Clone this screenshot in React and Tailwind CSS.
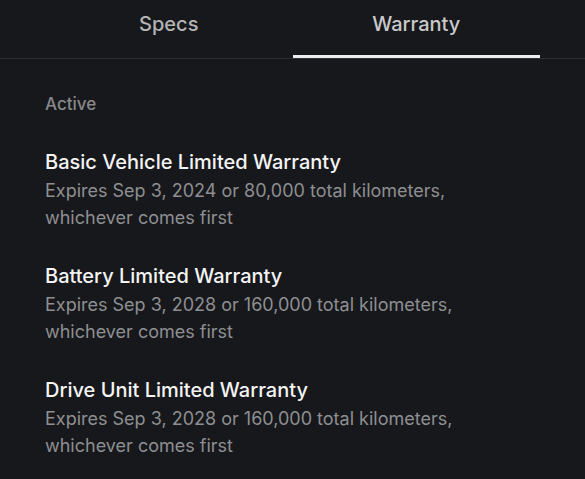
import React, { useState } from "react";

const warranties = [
  { id: "basic", title: "Basic Vehicle Limited Warranty", expires: "Sep 3, 2024", km: "80,000" },
  { id: "battery", title: "Battery Limited Warranty", expires: "Sep 3, 2028", km: "160,000" },
  { id: "drive", title: "Drive Unit Limited Warranty", expires: "Sep 3, 2028", km: "160,000" },
];

const tabs = ["Specs", "Warranty"];

export default function App() {
  const [tab, setTab] = useState("Warranty");

  return (
    <div className="min-h-screen bg-[#17181b] font-['Inter','Liberation_Sans',sans-serif] antialiased">
      {/* tabs */}
      <div className="flex px-[45px] border-b border-[#2d2e31]">
        {tabs.map((t) => (
          <button
            key={t}
            onClick={() => setTab(t)}
            className={`flex-1 h-[58px] flex justify-center pt-[10px] border-b-[3px] text-[20px] leading-7 font-medium ${
              tab === t ? "border-[#ececec] text-[#c9c9cb]" : "border-transparent text-[#b4b4b6]"
            }`}
          >
            {t}
          </button>
        ))}
      </div>

      {/* warranty list */}
      <div className="px-[45px] pt-[33px]">
        <p className="text-[17px] leading-6 font-medium text-[#88898b]">Active</p>
        <div className="mt-[32px] flex flex-col gap-[31px]">
          {warranties.map((w) => (
            <div key={w.id}>
              <h3 className="text-[20px] leading-7 font-medium text-[#f4f4f5]">{w.title}</h3>
              <p className="mt-px text-[18px] leading-[27px] text-[#8e8f92] max-w-[420px]">
                Expires {w.expires} or {w.km} total kilometers, whichever comes first
              </p>
            </div>
          ))}
        </div>
      </div>
    </div>
  );
}
